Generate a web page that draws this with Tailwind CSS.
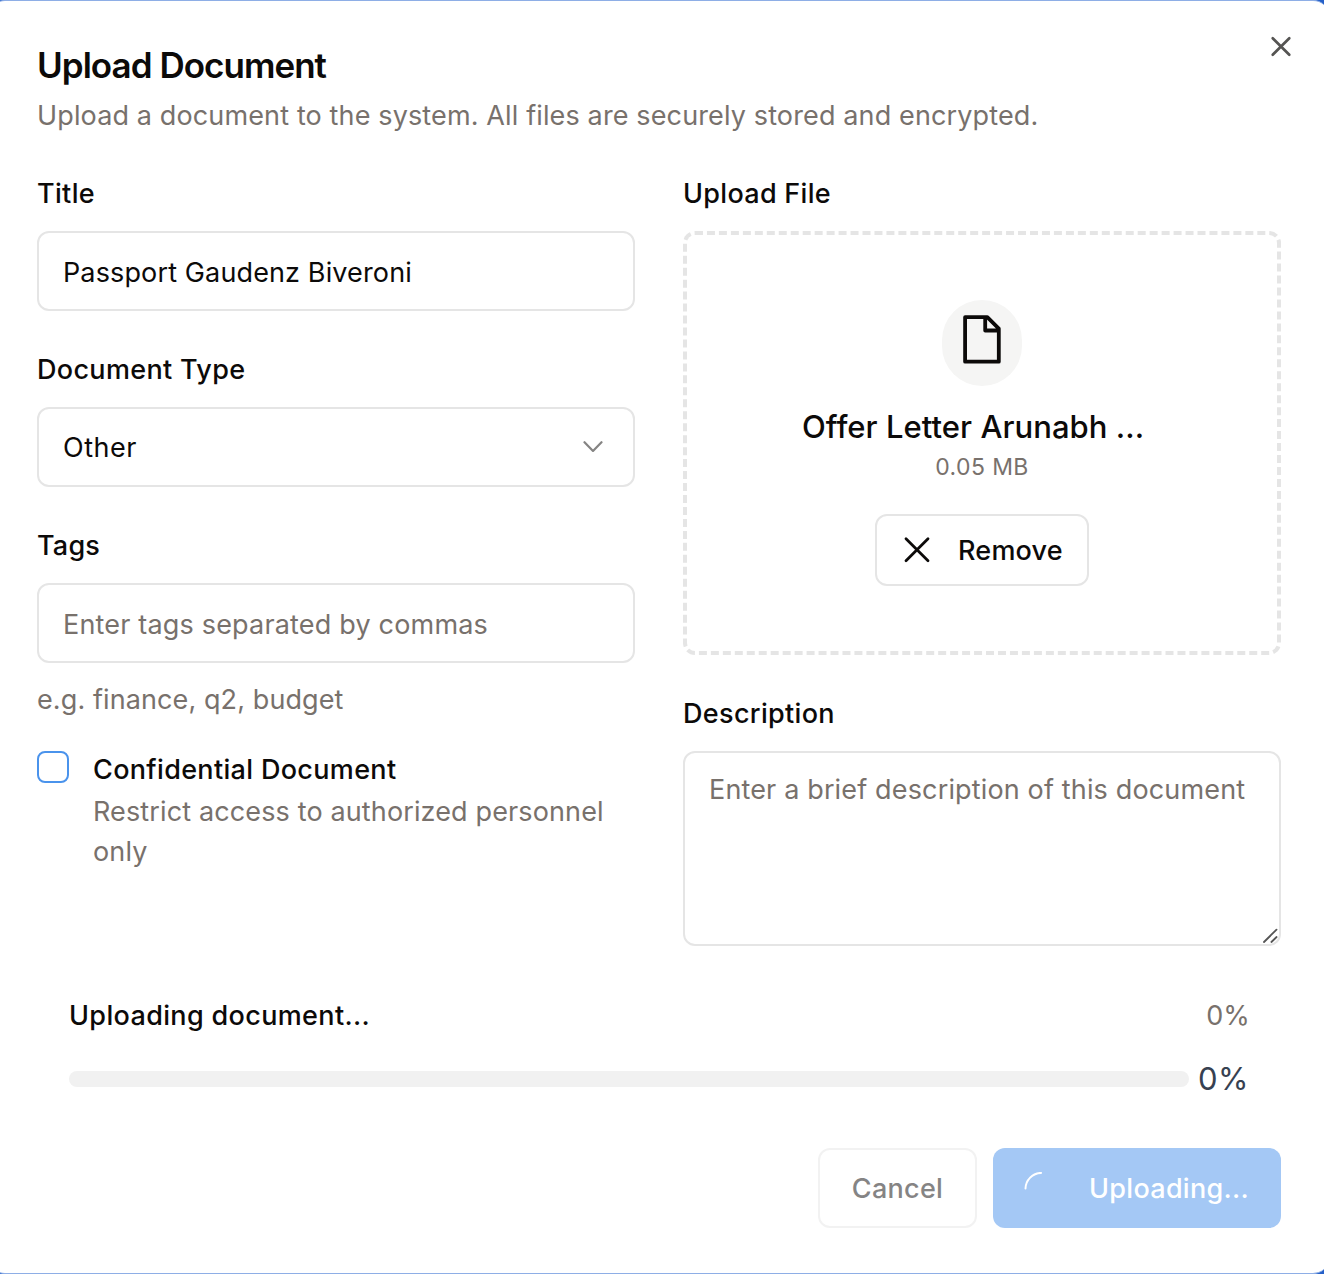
<!DOCTYPE html>
<html lang="en">
<head>
<meta charset="utf-8">
<title>Upload Document</title>
<script src="https://cdn.jsdelivr.net/npm/@tailwindcss/browser@4"></script>
</head>
<body class="h-[1274px] w-[1324px] overflow-hidden bg-[#2560c8] font-['Inter',sans-serif] text-[27px] leading-10 tracking-[0.13px] text-[#0c0a09]">
<main class="relative -ml-[11px] h-[1274px] w-[1340px] rounded-2xl border-y border-[#8eaee6] bg-white px-12 pt-[47px]">
  <button class="absolute top-[34px] right-[37px] text-[#555452]" aria-label="Close">
    <svg class="block size-[22px]" viewBox="0 0 22 22" fill="none" stroke="currentColor" stroke-width="2.7" stroke-linecap="round"><path d="M2.7 3.2 19.3 19.8M19.3 3.2 2.7 19.8"/></svg>
  </button>
  <header>
    <h1 class="text-[35px] leading-[35px] font-semibold tracking-[-0.97px]">Upload Document</h1>
    <p class="mt-[13px] text-[#78716c]">Upload a document to the system. All files are securely stored and encrypted.</p>
  </header>

  <div class="mt-[38px] grid h-[773px] grid-cols-2 gap-12">
    <section>
      <label class="block font-medium tracking-[0.33px]">Title</label>
      <div class="mt-[17px] flex h-20 items-center rounded-xl border-2 border-[#e5e5e5] px-6 pt-1">Passport Gaudenz Biveroni</div>
      <label class="mt-[39px] block font-medium tracking-[0.33px]">Document Type</label>
      <div class="mt-[17px] flex h-20 items-center justify-between rounded-xl border-2 border-[#e5e5e5] pr-[30px] pl-6">
        <span class="pt-0.5 tracking-[0.5px]">Other</span>
        <svg class="size-5" viewBox="0 0 20 20" fill="none" stroke="#858483" stroke-width="2.2" stroke-linecap="round" stroke-linejoin="round"><path d="M1.5 5.2 10 13.9l8.5-8.7"/></svg>
      </div>
      <label class="mt-[39px] block font-medium tracking-[0.2px]">Tags</label>
      <div class="mt-[17px] flex h-20 items-center rounded-xl border-2 border-[#e5e5e5] px-6 pt-1 tracking-[0.18px] text-[#78716c]">Enter tags separated by commas</div>
      <p class="mt-[17px] tracking-[0.1px] text-[#78716c]">e.g. finance, q2, budget</p>
      <div class="mt-[30px] flex gap-6">
        <span class="mt-px size-8 shrink-0 rounded-lg border-2 border-[#4a93ec]"></span>
        <div>
          <label class="block font-medium tracking-[0.33px]">Confidential Document</label>
          <p class="mt-0.5 text-[#78716c]">Restrict access to authorized personnel only</p>
        </div>
      </div>
    </section>

    <section>
      <label class="block font-medium tracking-[0.3px]">Upload File</label>
      <div class="mt-[17px] flex h-[424px] flex-col items-center rounded-xl border-4 border-dashed border-[#e5e5e5] pt-[65px]">
        <div class="flex h-[86px] w-20 justify-center rounded-full bg-[#f5f5f4] pt-[15px]">
          <svg class="h-[50px] w-10" viewBox="0 0 40 50" fill="none" stroke="currentColor" stroke-width="3.8" stroke-linejoin="round"><path d="M3.1 2.2h22.2L36.8 13.7v33H3.1zM23.2 2.2v13.3h13.6"/></svg>
        </div>
        <div class="mt-[21px] w-[360px] text-[31px] font-medium tracking-[0.05px] whitespace-nowrap">Offer Letter Arunabh ...</div>
        <div class="text-[23px] tracking-[0.4px] text-[#78716c]">0.05 MB</div>
        <button class="mt-[27px] flex h-[72px] w-[214px] items-center rounded-xl border-2 border-[#e5e5e5] pl-[26px] font-medium tracking-[0.2px]">
          <svg class="mr-[27px] size-7" viewBox="0 0 28 28" fill="none" stroke="currentColor" stroke-width="2.8" stroke-linecap="round"><path d="m3 2.7 22 22M25 2.7l-22 22"/></svg>
          <span class="pt-0.5">Remove</span>
        </button>
      </div>
      <label class="mt-[39px] block font-medium tracking-[0.33px]">Description</label>
      <div class="relative mt-[17px] h-[195px] rounded-xl border-2 border-[#e5e5e5] px-6 pt-[17px] tracking-[0.15px] whitespace-nowrap text-[#78716c]">Enter a brief description of this document
        <svg class="absolute right-0 bottom-0 size-4" viewBox="0 0 16 16" fill="none" stroke="#555" stroke-width="1.8" stroke-linecap="round"><path d="M1 14 13.5 1.7M8.4 14l5.2-5"/></svg>
      </div>
    </section>
  </div>

  <section class="mt-[49px] pr-[31px] pl-8">
    <div class="flex justify-between">
      <span class="font-medium tracking-[0.35px]">Uploading document...</span>
      <span class="text-[#78716c]">0%</span>
    </div>
    <div class="mt-[23px] flex h-10 items-center gap-[9px]">
      <div class="h-4 w-[1120px] shrink-0 rounded-full bg-[#f1f1f1]"></div>
      <span class="text-[31px] tracking-[0.5px] text-[#374151]">0%</span>
    </div>
  </section>

  <footer class="mt-[49px] flex justify-end gap-4 font-medium tracking-[0.3px]">
    <button class="h-20 w-[159px] rounded-xl border-2 border-[#f2f2f2] pt-0.5 text-[#858484]">Cancel</button>
    <button class="flex h-20 w-72 items-center rounded-xl bg-[#a4c8f5] pl-[31px] text-white">
      <svg class="mr-[33px] size-8 shrink-0" viewBox="0 0 32 32" fill="none" stroke="currentColor" stroke-width="2" stroke-linecap="round"><path d="M1.5 16.5A16 16 0 0 1 17 .9"/></svg>
      <span class="pt-0.5">Uploading...</span>
    </button>
  </footer>
</main>
</body>
</html>
